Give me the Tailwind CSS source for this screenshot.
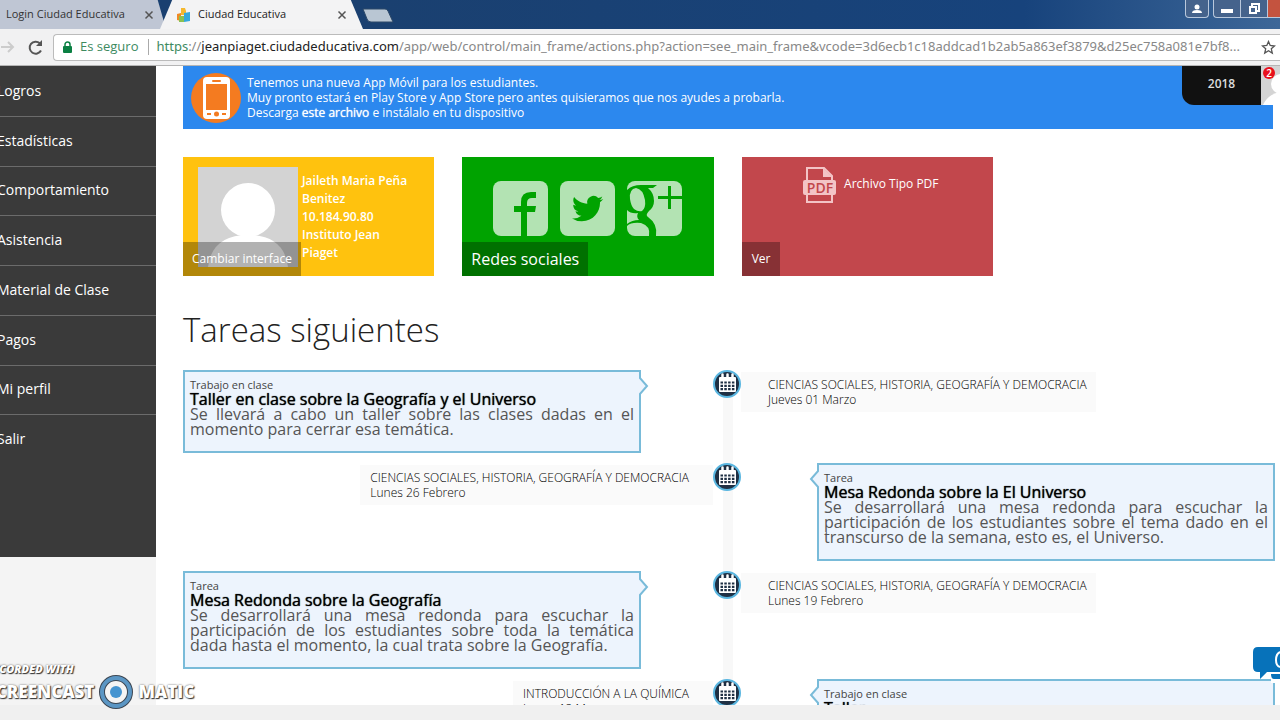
<!DOCTYPE html>
<html lang="es">
<head>
    <meta charset="UTF-8">
    <meta name="viewport" content="width=device-width, initial-scale=1.0">
    <title>Ciudad Educativa</title>
    <script src="https://cdn.jsdelivr.net/npm/@tailwindcss/browser@4"></script>
</head>
<body class="relative flex h-screen flex-col overflow-hidden bg-white font-['Open_Sans',sans-serif] text-[#222]">
    <!-- Shared shapes -->
    <svg class="hidden">
        <symbol id="calendar" viewBox="0 0 28 28">
            <circle cx="14" cy="14" r="13" fill="#1f3044" stroke="#5ab6e0" stroke-width="2" />
            <rect x="6" y="7" width="17" height="15" rx="1" fill="#fff" />
            <path d="M9.500 4.500v4M14.500 4.500v4M19.500 4.500v4" stroke="#fff" stroke-width="2.500" stroke-linecap="round" />
            <path d="M7.500 12.500h14M7.500 15.800h14M7.500 19.100h14" stroke="#1f3044" stroke-width="2.200" stroke-dasharray="2.500 1.300" />
        </symbol>
        <symbol id="close" viewBox="0 0 10 10">
            <path d="M1.500 1.500l7 7M8.500 1.500l-7 7" stroke="#555" stroke-width="1.500" />
        </symbol>
        <symbol id="arrow" viewBox="0 0 10 20">
            <path d="M0 1L8 10L0 19" fill="#edf4fd" stroke="#79bbd9" stroke-width="2" />
        </symbol>
    </svg>

    <!-- Tab strip -->
    <header class="flex h-[29px] shrink-0 items-stretch bg-linear-to-r from-[#1a4070] from-30% via-[#17437c] via-80% to-[#3d6798] text-[11px]">
        <button class="flex w-[166px] items-center justify-between bg-[#bfc6d4] pr-3 pl-[6px] text-[#333] [clip-path:polygon(0_0,95%_0,100%_100%,0_100%)]">
            <span>Login Ciudad Educativa</span>
            <svg class="size-[10px]"><use href="#close" /></svg>
        </button>
        <button class="-ml-[6px] flex w-[203px] items-center bg-[#f3f3f4] pr-[14px] pl-[16px] text-[#222] [clip-path:polygon(6%_0,94%_0,100%_100%,0_100%)]">
            <svg class="mr-[6px] size-4" viewBox="0 0 16 16">
                <path d="M5 1h4l1 3v4H5z" fill="#f5b82e" />
                <path d="M1 7l4-1v8l-4-1z" fill="#f08a24" />
                <path d="M3 9h5v6H3z" fill="#8cc152" />
                <path d="M8 6l6-1v9l-6 1z" fill="#35a8dd" />
            </svg>
            <span class="grow text-left">Ciudad Educativa</span>
            <svg class="mr-[2px] size-[10px]"><use href="#close" /></svg>
        </button>
        <button aria-label="Nueva pestaña" class="mt-2 ml-[-1px] h-[15px] w-8">
            <svg class="h-[15px] w-8" viewBox="0 0 32 15"><path d="M1 1h22q2 0 3 2l5 11H9q-3 0-4-3z" fill="#b9c6d3" stroke="#2c4868" /></svg>
        </button>
        <div class="ml-auto flex h-[18px] gap-1">
            <button aria-label="Usuario" class="flex w-6 items-center justify-center rounded-b border border-t-0 border-[#b9c8dc] bg-[#45638c]">
                <svg class="h-[10px] w-[10px]" viewBox="0 0 10 10" fill="#fff"><circle cx="5" cy="3" r="2.500" /><path d="M0 9q0-3 5-3t5 3z" /></svg>
            </button>
            <div class="flex overflow-hidden rounded-bl border-b border-l border-[#b9c8dc] bg-[#45638c]">
                <button aria-label="Minimizar" class="flex w-[27px] items-center justify-center border-r border-[#b9c8dc]"><span class="mt-1 h-[4px] w-3 bg-white"></span></button>
                <button aria-label="Restaurar" class="flex w-[27px] items-center justify-center border-r border-[#b9c8dc]">
                    <svg class="size-3" viewBox="0 0 12 12" fill="none" stroke="#fff" stroke-width="2"><path d="M4 3V1h7v7H9" /><rect x="2" y="4" width="6" height="6" /></svg>
                </button>
                <button aria-label="Cerrar" class="w-3 bg-[#c4533f]"></button>
            </div>
        </div>
    </header>

    <!-- Address bar -->
    <div class="flex h-[37px] shrink-0 items-center border-b border-[#b5b5b5] bg-[#f1f1f2]">
        <button aria-label="Adelante" class="w-[15px]">
            <svg class="h-4 w-[15px]" viewBox="0 0 15 16" fill="none" stroke="#ccc" stroke-width="2"><path d="M1 8h12M8 3l5 5-5 5" /></svg>
        </button>
        <button aria-label="Recargar" class="ml-3">
            <svg class="size-[17px]" viewBox="0 0 17 17"><path d="M14 11.500A6 6 0 1 1 12.800 4.300" fill="none" stroke="#555" stroke-width="2" /><path d="M15 1v6H9z" fill="#555" /></svg>
        </button>
        <div class="ml-[9px] flex h-[27px] min-w-0 grow items-center rounded-l border border-r-0 border-[#bbb] bg-white pr-1 pl-[9px] text-[13px] whitespace-nowrap">
            <svg class="h-3 w-[9px] shrink-0" viewBox="0 0 9 12"><path d="M2 6V3.500a2.500 2.500 0 0 1 5 0V6" fill="none" stroke="#0b8043" stroke-width="1.500" /><rect y="5" width="9" height="7" rx="1" fill="#0b8043" /></svg>
            <span class="ml-2 text-[#3d8a5f]">Es seguro</span>
            <span class="mr-[7px] ml-[10px] h-4 w-px bg-[#aaa]"></span>
            <div role="textbox" aria-label="Dirección" class="min-w-0 grow overflow-hidden font-['Noto_Sans',sans-serif] text-[#888]"><span class="text-[#3d8a5f]">https</span>://<span class="text-[#222]">jeanpiaget.ciudadeducativa.com</span>/app/web/control/main_frame/actions.php?action=see_main_frame&amp;vcode=3d6ecb1c18addcad1b2ab5a863ef3879&amp;d25ec758a081e7bf8...</div>
            <button aria-label="Marcador" class="shrink-0">
                <svg class="size-[15px]" viewBox="0 0 15 15" fill="none" stroke="#555" stroke-width="1.300"><path d="M7.500 1.500l1.700 4 4.300.4-3.200 2.900 1 4.300-3.800-2.300-3.800 2.300 1-4.300-3.200-2.900 4.300-.4z" /></svg>
            </button>
        </div>
    </div>

    <div class="flex min-h-0 grow overflow-hidden">
        <!-- Sidebar -->
        <aside class="w-[156px] shrink-0 bg-[#f4f4f4]">
            <nav class="h-[491px] bg-[#3a3a3a]">
                <ul class="flex h-[398px] flex-col divide-y divide-[#6b6b6b] pt-px text-[14px] text-white *:flex *:flex-1 *:items-center *:pb-[2px]">
                    <li><a href="#" class="-ml-[3px]">Logros</a></li>
                    <li><a href="#" class="-ml-[3px]">Estadísticas</a></li>
                    <li><a href="#" class="-ml-[3px]">Comportamiento</a></li>
                    <li><a href="#" class="-ml-[3px]">Asistencia</a></li>
                    <li><a href="#" class="-ml-[3px]">Material de Clase</a></li>
                    <li><a href="#" class="-ml-[3px]">Pagos</a></li>
                    <li><a href="#" class="-ml-[3px]">Mi perfil</a></li>
                    <li><a href="#" class="-ml-[3px]">Salir</a></li>
                </ul>
            </nav>
        </aside>

        <main class="relative min-w-0 grow pr-[5px] pl-[27px]">
            <!-- Notice -->
            <div class="mr-[2px] flex h-[63px] items-center bg-[#2c88ee] pl-2 text-[12px] leading-[15px] text-white">
                <svg class="mr-[6px] size-[50px] shrink-0" viewBox="0 0 50 50">
                    <circle cx="25" cy="25" r="25" fill="#f47b20" />
                    <rect x="12" y="4" width="27" height="42" rx="4" fill="#fff" />
                    <rect x="15" y="11" width="21" height="26" fill="#f47b20" />
                    <rect x="21" y="7" width="9" height="2" rx="1" fill="#f47b20" />
                    <path d="M16 41h4M31 41h4" stroke="#f47b20" stroke-width="2" />
                    <circle cx="25.500" cy="41" r="2.500" fill="#f47b20" />
                </svg>
                <p>Tenemos una nueva App Móvil para los estudiantes.<br>Muy pronto estará en Play Store y App Store pero antes quisieramos que nos ayudes a probarla.<br>Descarga <a href="#" class="[text-shadow:0_0_1px_#fff]">este archivo</a> e instálalo en tu dispositivo</p>
            </div>
            <div class="absolute top-0 right-0 flex h-[39px]">
                <button class="w-[79px] rounded-bl-xl bg-[#111] pb-[3px] text-[12px] font-semibold text-[#ddd]">2018</button>
                <div class="relative w-[19px] overflow-hidden bg-[#d4d4d4]">
                    <svg class="h-[39px] w-[19px]" viewBox="0 0 19 39" fill="#fff"><circle cx="20" cy="18" r="10" /><path d="M2 39q5-11 17-13v13z" /></svg>
                    <span class="absolute top-px left-[2px] size-3 rounded-full bg-[#e8101c] text-center text-[10px] leading-3 font-semibold text-white">2</span>
                </div>
            </div>

            <!-- Tiles -->
            <section class="mt-7 grid h-[119px] max-w-[810px] grid-cols-3 gap-7 text-white">
                <div class="relative flex bg-[#ffc20e] pt-[10px] pr-5 pl-[15px]">
                    <svg class="size-[100px] shrink-0 bg-[#d3d3d3]" viewBox="0 0 100 100" fill="#fff"><circle cx="50" cy="43" r="27" /><path d="M10 100q4-32 40-32t40 32z" /></svg>
                    <p class="ml-1 pt-[5px] text-[12px] leading-[18px] font-semibold">Jaileth Maria Peña Benitez<br>10.184.90.80<br>Instituto Jean Piaget</p>
                    <a href="#" class="absolute bottom-0 left-0 flex h-[34px] items-center bg-black/30 px-[9px] text-[12px]">Cambiar interface</a>
                </div>
                <div class="relative flex justify-center gap-3 bg-[#00a300] pt-6">
                    <a href="#" aria-label="Facebook">
                        <svg class="size-[55px]" viewBox="0 0 55 55"><rect width="55" height="55" rx="8" fill="#b3e3b3" /><path d="M28 55V31h-7v-6h7v-4q0-10 10-10h5v6h-4q-5 0-5 5v3h9l-1 6h-8v24z" fill="#00a300" /></svg>
                    </a>
                    <a href="#" aria-label="Twitter">
                        <svg class="size-[55px]" viewBox="0 0 55 55"><rect width="55" height="55" rx="8" fill="#b3e3b3" /><path transform="translate(12 12) scale(1.300)" fill="#00a300" d="M23.953 4.570a10 10 0 01-2.825.775 4.958 4.958 0 002.163-2.723c-.951.555-2.005.959-3.127 1.184a4.920 4.920 0 00-8.384 4.482C7.690 8.095 4.067 6.130 1.640 3.162a4.822 4.822 0 00-.666 2.475c0 1.710.870 3.213 2.188 4.096a4.904 4.904 0 01-2.228-.616v.060a4.923 4.923 0 003.946 4.827 4.996 4.996 0 01-2.212.085 4.936 4.936 0 004.604 3.417 9.867 9.867 0 01-6.102 2.105c-.390 0-.779-.023-1.170-.067a13.995 13.995 0 007.557 2.209c9.053 0 13.998-7.496 13.998-13.985 0-.210 0-.420-.015-.630A9.935 9.935 0 0024 4.590z" /></svg>
                    </a>
                    <a href="#" aria-label="Google Plus">
                        <svg class="size-[55px]" viewBox="0 0 55 55">
                            <rect width="55" height="55" rx="8" fill="#b3e3b3" />
                            <g fill="#00a300">
                                <path fill-rule="evenodd" d="M0 9q5-5 14-5h16l-4 3h-5q6 5 6 13 0 6-5 10-4 4-1 6 10 7 8 19H22q2-10-8-13Q4 41 0 45v-2q5-4 12-4-3-3-1-7Q4 33 0 29zM3 18q1 7 4 10 4 3 8 2 4-3 3-11-2-11-9-12-7 1-6 11z" />
                                <path d="M41 5h3v10h11v3H44v10h-3V18H31v-3h10z" />
                            </g>
                        </svg>
                    </a>
                    <a href="#" class="absolute bottom-0 left-0 flex h-[34px] items-center bg-black/30 px-[9px] text-[16px]">Redes sociales</a>
                </div>
                <div class="relative flex items-start justify-center bg-[#c2474c] pt-[10px] pl-[7px]">
                    <svg class="h-[36px] w-[33px]" viewBox="0 0 33 36">
                        <path d="M4 14V1h17l8 8v5M4 27v8h25v-8" fill="none" stroke="#f3c4c6" stroke-width="2" /><path d="M20 1l9 9h-9z" fill="#f3c4c6" />
                        <rect y="13" width="33" height="15" rx="2" fill="#f3c4c6" />
                        <text x="17" y="26" text-anchor="middle" font-size="14" font-weight="600" fill="#c2474c">PDF</text>
                    </svg>
                    <span class="mt-2 ml-2 text-[12px] font-medium">Archivo Tipo PDF</span>
                    <a href="#" class="absolute bottom-0 left-0 flex h-[34px] items-center bg-black/30 px-[10px] text-[12px]">Ver</a>
                </div>
            </section>

            <h1 class="mt-[34px] text-[33px] leading-[40px] font-light">Tareas siguientes</h1>

            <!-- Timeline -->
            <section class="relative mt-5 flex flex-col gap-[10px] text-[12px] leading-[15px]">
                <div class="absolute top-4 left-[540px] h-[400px] w-[10px] bg-[#f8f8f8]"></div>

                <div class="relative grid grid-cols-[530fr_28px_534fr] items-start">
                    <article class="relative w-[458px] border-2 border-[#79bbd9] bg-[#edf4fd] px-[5px] pt-[5px] pb-[14px]">
                        <svg class="absolute top-1 -right-[10px] h-5 w-[10px]"><use href="#arrow" /></svg>
                        <p class="text-[11px] text-[#444]">Trabajo en clase</p>
                        <h2 class="text-[16px] leading-[15px] text-black [text-shadow:0_0_1px_#000]">Taller en clase sobre la Geografía y el Universo</h2>
                        <p class="text-justify text-[16px] leading-[15px] text-[#555]">Se llevará a cabo un taller sobre las clases dadas en el momento para cerrar esa temática.</p>
                    </article>
                    <svg class="size-7"><use href="#calendar" /></svg>
                    <div class="mt-[2px] justify-self-start bg-[#fafafa] pt-[5px] pr-[9px] pb-[5px] pl-[27px] font-light text-black"><p>CIENCIAS SOCIALES, HISTORIA, GEOGRAFÍA Y DEMOCRACIA</p><p>Jueves 01 Marzo</p></div>
                </div>

                <div class="relative grid grid-cols-[530fr_28px_534fr] items-start">
                    <div class="mt-[2px] justify-self-end bg-[#fafafa] pt-[5px] pr-6 pb-[5px] pl-[10px] font-light text-black"><p>CIENCIAS SOCIALES, HISTORIA, GEOGRAFÍA Y DEMOCRACIA</p><p>Lunes 26 Febrero</p></div>
                    <svg class="size-7"><use href="#calendar" /></svg>
                    <article class="relative w-[458px] justify-self-end border-2 border-[#79bbd9] bg-[#edf4fd] px-[5px] pt-[5px] pb-[14px]">
                        <svg class="absolute top-1 -left-[10px] h-5 w-[10px] -scale-x-100"><use href="#arrow" /></svg>
                        <p class="text-[11px] text-[#444]">Tarea</p>
                        <h2 class="text-[16px] leading-[15px] text-black [text-shadow:0_0_1px_#000]">Mesa Redonda sobre la El Universo</h2>
                        <p class="text-justify text-[16px] leading-[15px] text-[#555]">Se desarrollará una mesa redonda para escuchar la participación de los estudiantes sobre el tema dado en el transcurso de la semana, esto es, el Universo.</p>
                    </article>
                </div>

                <div class="relative grid grid-cols-[530fr_28px_534fr] items-start">
                    <article class="relative w-[458px] border-2 border-[#79bbd9] bg-[#edf4fd] px-[5px] pt-[5px] pb-[14px]">
                        <svg class="absolute top-1 -right-[10px] h-5 w-[10px]"><use href="#arrow" /></svg>
                        <p class="text-[11px] text-[#444]">Tarea</p>
                        <h2 class="text-[16px] leading-[15px] text-black [text-shadow:0_0_1px_#000]">Mesa Redonda sobre la Geografía</h2>
                        <p class="text-justify text-[16px] leading-[15px] text-[#555]">Se desarrollará una mesa redonda para escuchar la participación de los estudiantes sobre toda la temática dada hasta el momento, la cual trata sobre la Geografía.</p>
                    </article>
                    <svg class="size-7"><use href="#calendar" /></svg>
                    <div class="mt-[2px] justify-self-start bg-[#fafafa] pt-[5px] pr-[9px] pb-[5px] pl-[27px] font-light text-black"><p>CIENCIAS SOCIALES, HISTORIA, GEOGRAFÍA Y DEMOCRACIA</p><p>Lunes 19 Febrero</p></div>
                </div>

                <div class="relative grid grid-cols-[530fr_28px_534fr] items-start">
                    <div class="mt-[2px] justify-self-end bg-[#fafafa] pt-[5px] pr-6 pb-[5px] pl-[10px] font-light text-black"><p>INTRODUCCIÓN A LA QUÍMICA</p><p>Lunes 12 Marzo</p></div>
                    <svg class="size-7"><use href="#calendar" /></svg>
                    <article class="relative w-[458px] justify-self-end border-2 border-[#79bbd9] bg-[#edf4fd] px-[5px] pt-[5px] pb-[14px]">
                        <svg class="absolute top-1 -left-[10px] h-5 w-[10px] -scale-x-100"><use href="#arrow" /></svg>
                        <p class="text-[11px] text-[#444]">Trabajo en clase</p>
                        <h2 class="text-[16px] leading-[15px] text-black [text-shadow:0_0_1px_#000]">Taller</h2>
                    </article>
                </div>
            </section>

            <!-- Chat -->
            <button aria-label="Chat" class="absolute right-0 bottom-[22px] h-9 w-7">
                <svg class="h-9 w-7" viewBox="0 0 28 36">
                    <path d="M6 0h22v25H15l-7 7v-7H6q-5 0-5-5V5q0-5 5-5z" fill="#0772ba" />
                    <path d="M19 27h9v9h-9z" fill="#fff" /><path d="M19 27h9v5h-6q-3 0-3-5z" fill="#0772ba" />
                    <path d="M28 5q-4 2-4 8t4 7" fill="none" stroke="#fff" stroke-width="2" />
                </svg>
            </button>
        </main>
    </div>

    <footer class="h-[15px] shrink-0 bg-[#f0f0f0]"></footer>

    <!-- Recorder mark -->
    <div class="absolute bottom-[10px] -left-[14px] font-extrabold text-white [text-shadow:1px_1px_1px_#333,0_0_2px_#555]">
        <p class="text-[11px] leading-[10px] italic">RECORDED WITH</p>
        <div class="flex items-center gap-1 text-[17px] leading-[36px]">
            <span>SCREENCAST</span>
            <svg class="size-9" viewBox="0 0 36 36"><circle cx="18" cy="18" r="14" fill="#f4f4f4" stroke="#3c4652" stroke-width="6" /><circle cx="18" cy="18" r="14" fill="none" stroke="#5b96c4" stroke-width="4" /><circle cx="18" cy="18" r="6" fill="#4594d0" /></svg>
            <span>MATIC</span>
        </div>
    </div>
</body>
</html>
